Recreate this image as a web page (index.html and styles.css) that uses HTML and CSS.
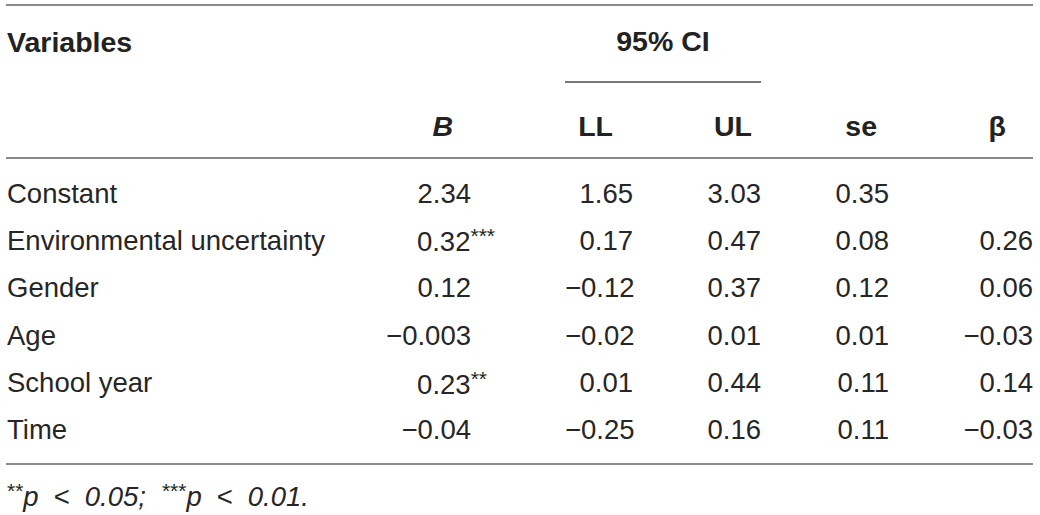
FILE: index.html
```html
<!DOCTYPE html>
<html lang="en">
<head>
    <meta charset="UTF-8">
    <meta name="viewport" content="width=device-width, initial-scale=1.0">
    <title>Regression results</title>
    <link rel="stylesheet" href="styles.css">
</head>
<body>
<table class="results">
    <colgroup>
        <col class="col-var">
        <col class="col-b">
        <col class="col-ll">
        <col class="col-ul">
        <col class="col-se">
        <col class="col-beta">
    </colgroup>
    <thead>
        <tr class="head-top">
            <th class="var">Variables</th>
            <th></th>
            <th colspan="2" class="ci">95% CI</th>
            <th></th>
            <th></th>
        </tr>
        <tr class="head-sub">
            <th></th>
            <th class="b"><i>B</i></th>
            <th class="ll">LL</th>
            <th class="ul">UL</th>
            <th class="se">se</th>
            <th class="beta">β</th>
        </tr>
    </thead>
    <tbody>
        <tr class="first">
            <td class="var">Constant</td>
            <td class="b">2.34</td>
            <td class="ll">1.65</td>
            <td class="ul">3.03</td>
            <td class="se">0.35</td>
            <td class="beta"></td>
        </tr>
        <tr>
            <td class="var">Environmental uncertainty</td>
            <td class="b">0.32<span class="sig">***</span></td>
            <td class="ll">0.17</td>
            <td class="ul">0.47</td>
            <td class="se">0.08</td>
            <td class="beta">0.26</td>
        </tr>
        <tr>
            <td class="var">Gender</td>
            <td class="b">0.12</td>
            <td class="ll">&minus;0.12</td>
            <td class="ul">0.37</td>
            <td class="se">0.12</td>
            <td class="beta">0.06</td>
        </tr>
        <tr>
            <td class="var">Age</td>
            <td class="b">&minus;0.003</td>
            <td class="ll">&minus;0.02</td>
            <td class="ul">0.01</td>
            <td class="se">0.01</td>
            <td class="beta">&minus;0.03</td>
        </tr>
        <tr>
            <td class="var">School year</td>
            <td class="b">0.23<span class="sig sig-2">**</span></td>
            <td class="ll">0.01</td>
            <td class="ul">0.44</td>
            <td class="se">0.11</td>
            <td class="beta">0.14</td>
        </tr>
        <tr class="last">
            <td class="var">Time</td>
            <td class="b">&minus;0.04</td>
            <td class="ll">&minus;0.25</td>
            <td class="ul">0.16</td>
            <td class="se">0.11</td>
            <td class="beta">&minus;0.03</td>
        </tr>
    </tbody>
</table>
<p class="note"><span class="note-star">**</span>p<span class="lt">&lt;</span>0.05;<span class="note-star gap">***</span>p<span class="lt">&lt;</span>0.01.</p>
</body>
</html>
```

FILE: styles.css
```css
body {
    margin: 0;
    padding: 4px 0 0 6px;
    background-color: #FFFFFF;
    color: #262626;
    font-family: "Liberation Sans", Arial, sans-serif;
}
.results {
    width: 1027px;
    border-collapse: collapse;
    table-layout: fixed;
    font-size: 27.5px;
}
.col-var { width: 374px; }
.col-b { width: 185px; }
.col-ll { width: 100px; }
.col-ul { width: 96px; }
.col-se { width: 128px; }
.col-beta { width: 144px; }

th, td {
    padding: 0;
    box-sizing: border-box;
    white-space: nowrap;
    line-height: 1.1;
}
thead th {
    font-weight: bold;
    font-size: 28.5px;
    color: #222;
}
.head-top {
    border-top: 2px solid #8a8a8a;
}
.head-top th {
    height: 77px;
    vertical-align: middle;
    padding-bottom: 3px;
}
.head-top .var {
    text-align: left;
    padding-left: 1px;
}
.head-top .ci {
    text-align: center;
    border-bottom: 2px solid #777;
}
.head-sub {
    border-bottom: 2px solid #8a8a8a;
}
.head-sub th {
    height: 76px;
    padding-top: 14px;
    text-align: right;
}
.head-sub .b { padding-right: 112px; }
.head-sub .ll { padding-right: 52px; }
.head-sub .ul { padding-right: 9px; }
.head-sub .se { padding-right: 12px; }
.head-sub .beta { padding-right: 27px; }

tbody td {
    height: 47.4px;
    text-align: right;
}
tbody .var {
    text-align: left;
    padding-left: 1px;
}
tbody .b { padding-right: 94px; }
tbody .ll { padding-right: 32px; }
tbody tr.first td {
    height: 59.4px;
    padding-top: 12px;
}
tbody tr.last {
    border-bottom: 2px solid #8a8a8a;
}
tbody tr.last td {
    height: 57.4px;
    padding-bottom: 10px;
}

.sig {
    font-size: 21px;
    vertical-align: 8px;
    margin-right: -24px;
}
.sig-2 {
    margin-right: -16px;
}
.note {
    margin: 14px 0 0 1px;
    font-size: 27.5px;
    line-height: 1.1;
    font-style: italic;
}
.note-star {
    font-size: 21px;
    vertical-align: 8px;
    font-style: normal;
}
.note-star.gap {
    margin-left: 16px;
}
.lt {
    margin: 0 15px;
    font-style: normal;
}
```
